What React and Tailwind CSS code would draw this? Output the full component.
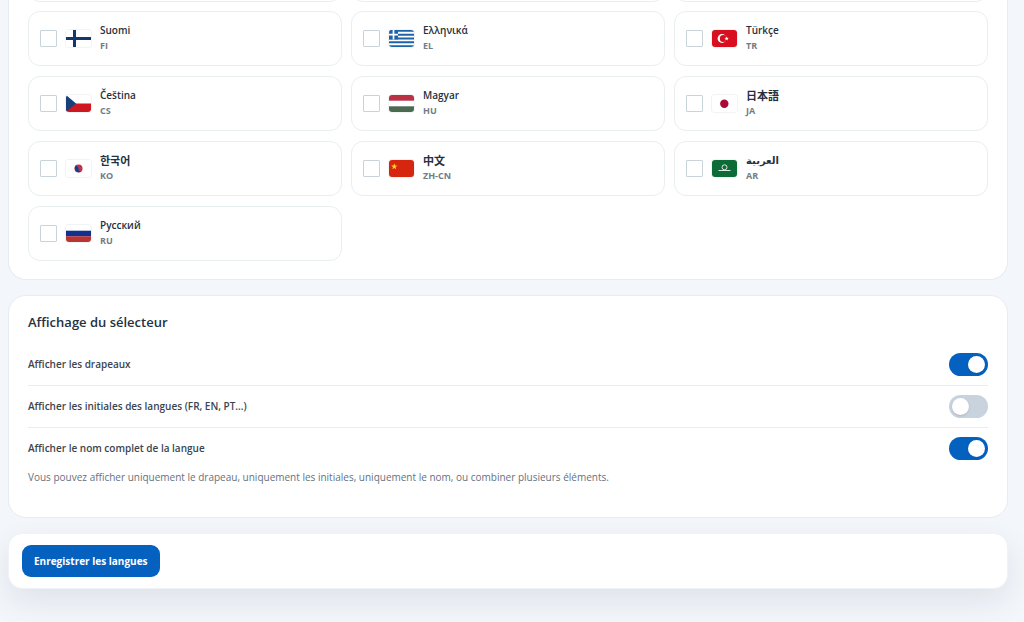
import React, { useState } from 'react';

const FLAGS = {
  FI: (
    <>
      <rect width="25" height="17" fill="#fff" />
      <path d="M8.5 0v17M0 8.5h25" stroke="#12396f" strokeWidth="3" />
    </>
  ),
  EL: (
    <>
      <rect width="25" height="17" fill="#1d63a8" />
      <path d="M0 2.8h25M0 6.6h25M0 10.4h25M0 14.2h25" stroke="#fff" strokeWidth="1.9" />
      <rect width="9" height="9.4" fill="#1d63a8" />
      <path d="M4.5 0v9.4M0 4.7h9" stroke="#fff" strokeWidth="1.7" />
    </>
  ),
  TR: (
    <>
      <rect width="25" height="17" fill="#d80f20" />
      <circle cx="10" cy="8.5" r="4.4" fill="#fff" />
      <circle cx="11.3" cy="8.5" r="3.5" fill="#d80f20" />
      <path d="M14.6 6.3l.6 1.5 1.6.1-1.3 1 .5 1.6-1.4-.9-1.3.9.4-1.6-1.2-1 1.6-.1z" fill="#fff" />
    </>
  ),
  CS: (
    <>
      <rect width="25" height="17" fill="#fff" />
      <rect y="8.5" width="25" height="8.5" fill="#cf1720" />
      <path d="M0 0l10 8.5L0 17z" fill="#173f7a" />
    </>
  ),
  HU: (
    <>
      <rect width="25" height="17" fill="#fff" />
      <rect width="25" height="5.7" fill="#b93144" />
      <rect y="11.3" width="25" height="5.7" fill="#4a6b52" />
    </>
  ),
  JA: (
    <>
      <rect width="25" height="17" fill="#fff" />
      <circle cx="12.3" cy="8.7" r="4.2" fill="#a90b35" />
    </>
  ),
  KO: (
    <>
      <rect width="25" height="17" fill="#fff" />
      <circle cx="12.5" cy="8.5" r="4" fill="#c2334a" />
      <path d="M9.7 5.7A4 4 0 0 0 15.3 11.3C14 12 12.6 11 12.5 8.5 12.2 6.8 11 6 9.7 5.7z" fill="#1d3a86" />
    </>
  ),
  'ZH-CN': (
    <>
      <rect width="25" height="17" fill="#d6260f" />
      <path d="M5.3 3.3l.8 2.2 2.3.1-1.8 1.4.6 2.3-1.9-1.3-1.9 1.3.6-2.3-1.8-1.4 2.3-.1z" fill="#ffd21c" />
    </>
  ),
  AR: (
    <>
      <rect width="25" height="17" fill="#0d6b37" />
      <circle cx="12.5" cy="7.3" r="2.5" fill="none" stroke="#d9ebe0" />
      <path d="M6.5 10.5h12" stroke="#d9ebe0" />
    </>
  ),
  RU: (
    <>
      <rect width="25" height="17" fill="#fff" />
      <rect y="5.7" width="25" height="5.7" fill="#12308c" />
      <rect y="11.3" width="25" height="5.7" fill="#bb3434" />
    </>
  ),
};

const LANGUAGES = [
  { code: 'FI', name: 'Suomi' },
  { code: 'EL', name: 'Ελληνικά' },
  { code: 'TR', name: 'Türkçe' },
  { code: 'CS', name: 'Čeština' },
  { code: 'HU', name: 'Magyar' },
  { code: 'JA', name: '日本語', cjk: true },
  { code: 'KO', name: '한국어', cjk: true },
  { code: 'ZH-CN', name: '中文', cjk: true },
  { code: 'AR', name: 'العربية' },
  { code: 'RU', name: 'Русский' },
];

const OPTIONS = [
  { key: 'flags', label: 'Afficher les drapeaux' },
  { key: 'initials', label: 'Afficher les initiales des langues (FR, EN, PT...)' },
  { key: 'names', label: 'Afficher le nom complet de la langue' },
];

const LanguageCard = ({ code, name, cjk, checked, onChange }) => (
  <label className="flex items-center gap-[9px] rounded-xl border border-[#e9eef1] px-[11px] py-[11px]">
    <input
      type="checkbox"
      checked={checked}
      onChange={onChange}
      className="size-[17px] shrink-0 appearance-none rounded-[1px] border border-[#c8d3da] bg-white checked:border-[#0561c0] checked:bg-[#0561c0]"
    />
    <svg viewBox="0 0 25 17" aria-hidden="true" className="h-[17px] w-[25px] shrink-0 rounded-[3px] shadow-[0_0_0_1px_rgba(15,23,42,0.05)]">
      {FLAGS[code]}
    </svg>
    <span className="flex flex-col">
      <span className={`h-[15px] leading-[15px] font-semibold text-[#26313d] ${cjk ? 'text-[11px]' : 'text-[10px]'}`}>{name}</span>
      <span className="text-[9px] leading-4 font-bold text-[#727c88]">{code}</span>
    </span>
  </label>
);

const App = () => {
  const [selected, setSelected] = useState([]);
  const [display, setDisplay] = useState({ flags: true, initials: false, names: true });

  const toggleLanguage = (code) => {
    setSelected(selected.includes(code) ? selected.filter((c) => c !== code) : [...selected, code]);
  };

  return (
    <main className="min-h-screen bg-[#f3f6fb] pr-4 pb-8 pl-2 font-['Open_Sans','Noto_Sans_CJK_JP','Noto_Sans_CJK_KR','DejaVu_Sans',sans-serif]">
      <section className="rounded-b-[18px] border border-t-0 border-[#e6ecf2] bg-white px-[19px] pb-[18px]">
        {/* Tail of the row that is scrolled out of view */}
        <div aria-hidden="true" className="grid h-0.5 grid-cols-3 content-end gap-x-[9px] overflow-hidden">
          <div className="h-14 rounded-xl border border-[#e9eef1]" />
          <div className="h-14 rounded-xl border border-[#e9eef1]" />
          <div className="h-14 rounded-xl border border-[#e9eef1]" />
        </div>
        <div className="grid grid-cols-3 gap-x-[9px] gap-y-2.5 pt-[9px]">
          {LANGUAGES.map((lang) => (
            <LanguageCard
              key={lang.code}
              {...lang}
              checked={selected.includes(lang.code)}
              onChange={() => toggleLanguage(lang.code)}
            />
          ))}
        </div>
      </section>

      <section className="mt-[15px] rounded-[18px] border border-[#e6ecf2] bg-white px-[19px] pt-4 pb-8">
        <h2 className="text-[13px] leading-5 font-semibold text-[#26313d]">Affichage du sélecteur</h2>
        <div className="mt-3 divide-y divide-[#e9eef3]">
          {OPTIONS.map((option) => (
            <label key={option.key} className="flex items-center justify-between py-[9px] text-[10px] font-semibold text-[#3a4551]">
              {option.label}
              <input
                type="checkbox"
                role="switch"
                checked={display[option.key]}
                onChange={(e) => setDisplay({ ...display, [option.key]: e.target.checked })}
                className="h-[23px] w-[39px] shrink-0 appearance-none rounded-full bg-[#c9d3de] p-[3px] before:block before:size-[17px] before:rounded-full before:bg-white before:shadow-sm before:transition-transform checked:bg-[#0561c0] checked:before:translate-x-4"
              />
            </label>
          ))}
        </div>
        <p className="text-[10px] leading-4 text-[#66717e]">
          Vous pouvez afficher uniquement le drapeau, uniquement les initiales, uniquement le nom, ou combiner plusieurs éléments.
        </p>
      </section>

      <div className="mt-[15px] rounded-[14px] border border-[#eff2f6] bg-white px-[13px] py-[11px] shadow-[0_12px_32px_rgba(24,24,36,0.09)]">
        <button type="button" className="rounded-[9px] bg-[#0561c0] px-3 py-2 text-[10px] leading-4 font-bold text-white hover:bg-[#0452a4]">
          Enregistrer les langues
        </button>
      </div>
    </main>
  );
};

export default App;
